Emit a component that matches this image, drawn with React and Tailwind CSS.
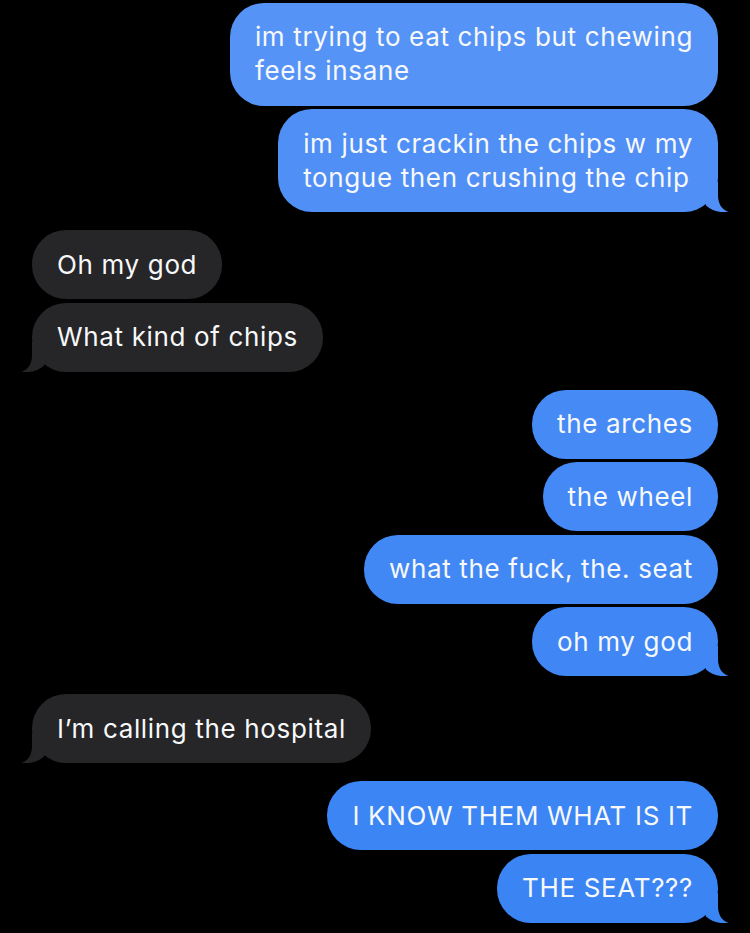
import React from 'react';

const groups = [
  {
    me: true,
    items: [
      { lines: ['im trying to eat chips but chewing', 'feels insane'], bg: 'bg-[#5594f6]', tail: 'text-[#5594f6]' },
      { lines: ['im just crackin the chips w my', 'tongue then crushing the chip'], bg: 'bg-[#508ff5]', tail: 'text-[#508ff5]' },
    ],
  },
  {
    me: false,
    items: [{ lines: ['Oh my god'] }, { lines: ['What kind of chips'] }],
  },
  {
    me: true,
    items: [
      { lines: ['the arches'], bg: 'bg-[#468af5]', tail: 'text-[#468af5]' },
      { lines: ['the wheel'], bg: 'bg-[#4489f5]', tail: 'text-[#4489f5]' },
      { lines: ['what the fuck, the. seat'], bg: 'bg-[#4288f5]', tail: 'text-[#4288f5]' },
      { lines: ['oh my god'], bg: 'bg-[#4087f5]', tail: 'text-[#4087f5]' },
    ],
  },
  {
    me: false,
    items: [{ lines: ['I’m calling the hospital'] }],
  },
  {
    me: true,
    items: [
      { lines: ['I KNOW THEM WHAT IS IT'], bg: 'bg-[#3c85f4]', tail: 'text-[#3c85f4]' },
      { lines: ['THE SEAT???'], bg: 'bg-[#3b84f4]', tail: 'text-[#3b84f4]' },
    ],
  },
];

function Tail({ me, color }) {
  return (
    <svg
      viewBox="0 0 30 30"
      className={`absolute bottom-0 w-[30px] h-[30px] ${color} ${
        me ? 'right-[-11px]' : 'left-[-11px] scale-x-[-1]'
      }`}
    >
      <path
        fill="currentColor"
        d="M0 0H19V13C19 21 22 27 29.5 30C22 31 13 29 7 23.5L0 0Z"
      />
    </svg>
  );
}

function Bubble({ me, msg, last }) {
  const bg = me ? msg.bg : 'bg-[#262628]';
  const tail = me ? msg.tail : 'text-[#262628]';
  return (
    <div
      className={`relative ${bg} rounded-[34px] px-[25px] py-[17.5px] text-[26px] leading-[34px] tracking-[0.65px] text-[#f7f8fa] whitespace-nowrap`}
    >
      {msg.lines.map((l, i) => (
        <div key={i}>{l}</div>
      ))}
      {last && <Tail me={me} color={tail} />}
    </div>
  );
}

export default function App() {
  return (
    <div
      className="w-[750px] h-[933px] bg-black overflow-hidden pt-[2.5px] px-[32px] flex flex-col gap-[18px]"
      style={{ fontFamily: 'Inter, "Noto Sans", sans-serif' }}
    >
      {groups.map((g, gi) => (
        <div
          key={gi}
          className={`flex flex-col gap-[3.5px] ${g.me ? 'items-end' : 'items-start'}`}
        >
          {g.items.map((m, i) => (
            <Bubble key={i} me={g.me} msg={m} last={i === g.items.length - 1} />
          ))}
        </div>
      ))}
    </div>
  );
}
